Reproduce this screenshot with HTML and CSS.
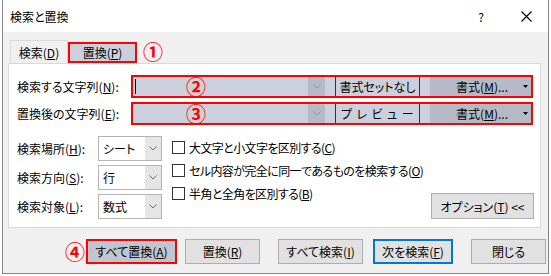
FILE: index.html
```html
<!DOCTYPE html>
<html lang="ja">
<head>
<meta charset="utf-8">
<title>検索と置換</title>
<link rel="stylesheet" href="styles.css">
</head>
<body>
<div class="window">
  <div class="titlebar">
    <span class="title">検索と置換</span>
    <span class="help">?</span>
    <span class="close"><svg width="11" height="11" viewBox="0 0 11 11"><path d="M0.5 0.5L10.5 10.5M10.5 0.5L0.5 10.5" stroke="#000" stroke-width="1.1" fill="none"/></svg></span>
  </div>
  <div class="content">
    <div class="tabs">
      <div class="tab">検索(<u>D</u>)</div>
      <div class="tab tab-active">置換(<u>P</u>)</div>
      <span class="mark mark-tab">①</span>
    </div>
    <div class="panel">
      <div class="field-row">
        <span class="field-label">検索する文字列(<u>N</u>):</span>
        <div class="combo">
          <div class="combo-input"><span class="caret"></span><span class="mark mark-field">②</span></div>
          <div class="combo-drop"><svg width="8" height="5" viewBox="0 0 8 5"><polyline points="0.5,0.5 4,4 7.5,0.5" fill="none" stroke="#8a8f99" stroke-width="1"/></svg></div>
          <div class="combo-gap"></div>
          <div class="preview">書式セットなし</div>
          <div class="combo-gap"></div>
          <div class="format-btn">書式(<u>M</u>)...<svg class="tri" width="5" height="3" viewBox="0 0 5 3"><polygon points="0,0 5,0 2.5,3" fill="#000"/></svg></div>
        </div>
      </div>
      <div class="field-row">
        <span class="field-label">置換後の文字列(<u>E</u>):</span>
        <div class="combo">
          <div class="combo-input"><span class="caret caret-none"></span><span class="mark mark-field">③</span></div>
          <div class="combo-drop"><svg width="8" height="5" viewBox="0 0 8 5"><polyline points="0.5,0.5 4,4 7.5,0.5" fill="none" stroke="#8a8f99" stroke-width="1"/></svg></div>
          <div class="combo-gap"></div>
          <div class="preview preview-spaced">プレビュー</div>
          <div class="combo-gap"></div>
          <div class="format-btn">書式(<u>M</u>)...<svg class="tri" width="5" height="3" viewBox="0 0 5 3"><polygon points="0,0 5,0 2.5,3" fill="#000"/></svg></div>
        </div>
      </div>
      <div class="options">
        <div class="selects">
          <div class="select-row">
            <span class="select-label">検索場所(<u>H</u>):</span>
            <div class="select"><span class="select-value">シート</span><span class="select-drop"><svg width="8" height="5" viewBox="0 0 8 5"><polyline points="0.5,0.5 4,4 7.5,0.5" fill="none" stroke="#6d6d6d" stroke-width="1"/></svg></span></div>
          </div>
          <div class="select-row">
            <span class="select-label">検索方向(<u>S</u>):</span>
            <div class="select"><span class="select-value">行</span><span class="select-drop"><svg width="8" height="5" viewBox="0 0 8 5"><polyline points="0.5,0.5 4,4 7.5,0.5" fill="none" stroke="#6d6d6d" stroke-width="1"/></svg></span></div>
          </div>
          <div class="select-row">
            <span class="select-label">検索対象(<u>L</u>):</span>
            <div class="select"><span class="select-value">数式</span><span class="select-drop"><svg width="8" height="5" viewBox="0 0 8 5"><polyline points="0.5,0.5 4,4 7.5,0.5" fill="none" stroke="#6d6d6d" stroke-width="1"/></svg></span></div>
          </div>
        </div>
        <div class="checks">
          <label class="check"><span class="box"></span>大文字と小文字を区別する(<u>C</u>)</label>
          <label class="check"><span class="box"></span>セル内容が完全に同一であるものを検索する(<u>O</u>)</label>
          <label class="check"><span class="box"></span>半角と全角を区別する(<u>B</u>)</label>
        </div>
        <div class="btn option-btn">オプション(<u>T</u>) &lt;&lt;</div>
      </div>
    </div>
    <div class="actions">
      <span class="mark mark-action">④</span>
      <div class="btn btn-replace-all">すべて置換(<u>A</u>)</div>
      <div class="btn btn-replace">置換(<u>R</u>)</div>
      <div class="btn btn-find-all">すべて検索(<u>I</u>)</div>
      <div class="btn btn-find-next">次を検索(<u>F</u>)</div>
      <div class="btn btn-close">閉じる</div>
    </div>
  </div>
</div>
</body>
</html>
```

FILE: styles.css
```css
* { box-sizing: border-box; }

body {
  margin: 0;
  background: #ffffff;
  font-family: "Noto Sans CJK JP", "Noto Sans", sans-serif;
  font-size: 12px;
  color: #000;
  font-feature-settings: "palt";
}

u { text-underline-offset: 1px; }

.window {
  margin-left: 2px;
  width: 547px;
  height: 274px;
  border: 1px solid #858585;
  border-top: none;
  background: #f0f0f0;
  display: flex;
  flex-direction: column;
}

.titlebar {
  flex: none;
  height: 32px;
  background: #fff;
  display: flex;
  align-items: center;
  padding-left: 7px;
}

.title { font-size: 12px; }

.help {
  margin-left: auto;
  width: 10px;
  text-align: center;
  font-size: 12px;
}

.close {
  display: flex;
  margin-left: 35px;
  margin-right: 16px;
}

.content {
  display: flex;
  flex-direction: column;
  padding: 8px 7px 0 5px;
}

.tabs {
  height: 23px;
  display: flex;
  align-items: flex-end;
  padding-left: 2px;
}

.tab {
  height: 23px;
  width: 58px;
  border: 1px solid #d9d9d9;
  border-bottom: none;
  display: flex;
  align-items: center;
  justify-content: center;
}

.tab-active {
  height: 21px;
  width: 69px;
  border: 2px solid #ff0000;
  background: #cbd0dc;
}

.mark {
  color: #ff0000;
  font-size: 20px;
  line-height: 20px;
  font-weight: bold;
}

.mark-tab {
  align-self: center;
  margin-left: 6px;
}

.panel {
  height: 165px;
  background: #fff;
  border: 1px solid #d9d9d9;
  padding: 11px 6px 8px 8px;
  display: flex;
  flex-direction: column;
}

.field-row {
  display: flex;
  align-items: center;
  height: 23px;
}

.field-row + .field-row { margin-top: 4px; }

.field-label { width: 114px; }

.combo {
  width: 402px;
  height: 23px;
  border: 2px solid #ff0000;
  display: flex;
  background: #cbd0dc;
}

.combo-input {
  width: 175px;
  display: flex;
  align-items: center;
  padding-left: 2px;
}

.caret {
  width: 1px;
  height: 15px;
  background: #000;
}

.caret-none { background: transparent; }

.mark-field { margin-left: 50px; }

.combo-drop {
  width: 17px;
  background: #b5bac6;
  display: flex;
  align-items: center;
  justify-content: center;
}

.combo-gap { width: 10px; }

.preview {
  width: 85px;
  border-left: 1px solid #333;
  border-right: 1px solid #333;
  display: flex;
  align-items: center;
  justify-content: center;
}

.preview-spaced { letter-spacing: 4.5px; padding-left: 4px; }

.format-btn {
  flex: 1;
  background: #b5bac6;
  display: flex;
  align-items: center;
  justify-content: flex-end;
  padding-right: 3px;
}

.tri { margin-left: 15px; }

.options {
  margin-top: 11px;
  display: flex;
  align-items: flex-end;
}

.selects {
  flex: none;
  display: flex;
  flex-direction: column;
  gap: 4px;
}

.select-row {
  display: flex;
  align-items: center;
  height: 25px;
}

.select-label { width: 81px; }

.select {
  width: 64px;
  height: 25px;
  border: 1px solid #b4b4b4;
  background: #fff;
  display: flex;
}

.select-value {
  flex: 1;
  padding-left: 4px;
  display: flex;
  align-items: center;
}

.select-drop {
  width: 16px;
  background: #e5e5e5;
  display: flex;
  align-items: center;
  justify-content: center;
}

.checks {
  flex: 0 1 auto;
  min-width: 0;
  align-self: flex-start;
  margin-left: 10px;
  display: flex;
  flex-direction: column;
  white-space: nowrap;
  letter-spacing: -0.6px;
}

.check {
  height: 23px;
  display: flex;
  align-items: center;
}

.box {
  flex: none;
  width: 13px;
  height: 13px;
  border: 1px solid #333;
  background: #fff;
  margin-right: 4px;
}

.btn {
  flex: none;
  height: 25px;
  background: #e1e1e1;
  border: 1px solid #adadad;
  display: flex;
  align-items: center;
  justify-content: center;
  white-space: nowrap;
}

.option-btn {
  margin-left: auto;
  width: 103px;
  height: 26px;
}

.actions {
  margin-top: 11px;
  display: flex;
  align-items: center;
}

.mark-action { margin-left: 57px; width: 19px; }

.btn-replace-all {
  margin-left: 2px;
  width: 91px;
  border: 2px solid #ff0000;
  background: #bfc5d1;
}

.btn-replace { margin-left: 8px; width: 75px; }
.btn-find-all { margin-left: 18px; width: 85px; }

.btn-find-next {
  margin-left: 10px;
  width: 80px;
  border: 2px solid #0078d7;
}

.btn-close { margin-left: 18px; width: 75px; }
```
